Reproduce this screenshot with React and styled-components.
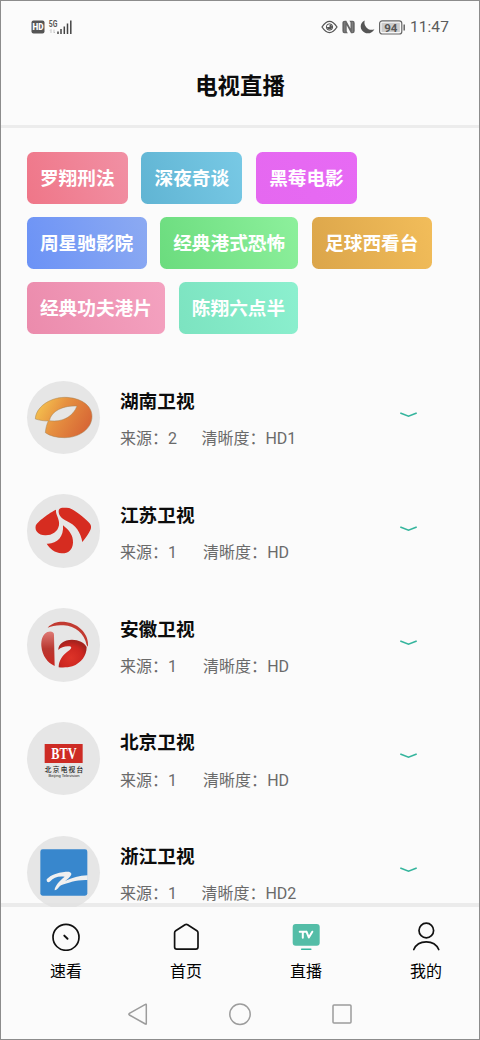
import React from 'react';
import styled, { createGlobalStyle, ThemeProvider } from 'styled-components';

const theme = {
  background: '#fbfbfb',
  divider: '#ececec',
  frame: '#8c8c8c',
  avatar: '#e6e6e6',
  text: '#0c0c0c',
  muted: '#6a6a6a',
  status: '#5c5c5c',
  system: '#9c9c9c',
  accent: '#35b59d'
};

const GlobalStyle = createGlobalStyle`
  * {
    box-sizing: border-box;
  }

  body {
    margin: 0;
    font-family: Roboto, 'Noto Sans CJK SC', sans-serif;
  }

  svg {
    display: block;
    flex-shrink: 0;
  }
`;

const Screen = styled.div`
  width: 480px;
  height: 1040px;
  display: flex;
  flex-direction: column;
  overflow: hidden;
  color: ${props => props.theme.text};
  background: ${props => props.theme.background};
  border: 1px solid ${props => props.theme.frame};
`;

const StatusBar = styled.div`
  height: 52px;
  display: flex;
  align-items: center;
  justify-content: space-between;
  padding: 0 30px;
  flex-shrink: 0;
`;

const StatusGroup = styled.div`
  display: flex;
  align-items: center;
  gap: ${props => props.gap};
`;

const Clock = styled.span`
  font-size: 15.5px;
  line-height: 20px;
  letter-spacing: 0.1px;
  color: ${props => props.theme.status};
`;

const Header = styled.header`
  height: 75px;
  padding-top: 16px;
  flex-shrink: 0;
  border-bottom: 3px solid ${props => props.theme.divider};
`;

const Title = styled.h1`
  margin: 0;
  font-size: 22.4px;
  line-height: 34px;
  font-weight: 700;
  text-align: center;
`;

const Content = styled.main`
  height: 779px;
  overflow: hidden;
  flex-shrink: 0;
`;

const Tags = styled.div`
  display: flex;
  flex-wrap: wrap;
  gap: 13.33px;
  padding: 23.5px 25.6px 0;
`;

const Tag = styled.button`
  height: 52px;
  padding: 1px 13.33px 0;
  border: none;
  border-radius: 6.5px;
  font-family: inherit;
  font-size: 18.67px;
  font-weight: 700;
  line-height: 52px;
  color: #fff;
  background: linear-gradient(70deg, ${props => props.from}, ${props => props.to});
`;

const Channels = styled.div`
  padding: 46.5px 25.6px 0;
`;

const Channel = styled.div`
  height: 113.83px;
  display: flex;
`;

const Avatar = styled.div`
  width: 73.33px;
  height: 73.33px;
  border-radius: 50%;
  overflow: hidden;
  flex-shrink: 0;
  background: ${props => props.theme.avatar};
`;

const Info = styled.div`
  flex-grow: 1;
  margin-left: 20px;
`;

const Name = styled.div`
  margin-top: 7.2px;
  font-size: 18.67px;
  line-height: 28px;
  font-weight: 700;
`;

const Meta = styled.div`
  display: flex;
  margin-top: 11.2px;
  font-size: 16px;
  line-height: 24px;
  font-weight: 400;
  color: ${props => props.theme.muted};
`;

const Source = styled.span`
  width: ${props => props.width};
`;

const Expand = styled.div`
  margin-top: 31.2px;
  margin-right: 36.4px;
`;

/* the translucent top border lies over the last row of the list */
const TabBar = styled.nav`
  height: 83px;
  display: flex;
  justify-content: space-between;
  margin-top: -4px;
  padding: 14px 33px 0 45px;
  flex-shrink: 0;
  position: relative;
  background: ${props => props.theme.background};
  background-clip: padding-box;
  border-top: 4px solid rgba(225, 225, 225, 0.6);
`;

const Tab = styled.div`
  width: 40px;
  display: flex;
  flex-direction: column;
  align-items: center;
`;

const TabLabel = styled.span`
  margin-top: 9px;
  font-size: 16px;
  line-height: 24px;
  color: #000;
`;

const SystemBar = styled.div`
  display: flex;
  justify-content: center;
  gap: 78px;
  padding-top: 16px;
`;

const SignalIcon = () => (
  <svg width="24" height="16" viewBox="48 19 24 16">
    <text x="48.8" y="27" fontSize="8.5" fontWeight="700" fontFamily="Roboto" fill="#555" textLength="8.6" lengthAdjust="spacingAndGlyphs">
      5G
    </text>
    <path d="M51 33v-3.5l-1 1M54 29.5V33l1-1" fill="none" stroke="#bbb" strokeWidth="0.8" />
    <path d="M58 31.5V34M61 29V34M64.3 26.5V34M67.5 23.5V34M70.8 20.5V34" stroke="#444" strokeWidth="1.5" />
  </svg>
);

const HdIcon = () => (
  <svg width="14" height="14" viewBox="0 0 14 14">
    <rect x="0.5" y="0.5" width="13" height="13" rx="2" fill="#555" />
    <text x="1.5" y="10" fontSize="8.5" fontWeight="900" fontFamily="Roboto" fill="#fff" textLength="11" lengthAdjust="spacingAndGlyphs">
      HD
    </text>
  </svg>
);

const EyeIcon = () => (
  <svg width="17" height="14" viewBox="0 0 17 14" fill="none" stroke="#555">
    <path d="M1 7C3.8 2.8 6 1.3 8.5 1.3S13.2 2.8 16 7C13.2 11.2 11 12.7 8.5 12.7S3.8 11.2 1 7Z" strokeWidth="1.3" />
    <circle cx="8.5" cy="7" r="3.2" strokeWidth="1" />
    <path d="M8.5 4.5A2.5 2.5 0 1 1 6 7H8.5Z" fill="#555" stroke="none" />
  </svg>
);

const NfcIcon = () => (
  <svg width="13" height="14" viewBox="0 0 13 14">
    <path d="M3 .7H4.3L8.5 8.5V2.5L7.4 .7H10.5Q12.7 .7 12.7 3V11Q12.7 13.3 10.5 13.3H9L4.7 5.3V11.2L5.8 13.3H2.5Q.4 13.3 .4 11V3Q.4 .7 3 .7Z" fill="#666" />
    <path d="M2.8 2V12M10.3 2V12" stroke="#999" strokeWidth="0.6" />
  </svg>
);

const MoonIcon = () => (
  <svg width="15" height="14" viewBox="0 0 15 14">
    <path d="M4.8 .4C.6 2 -.4 7 1.9 10.3C5 14.8 12 14.3 14.4 9.2C11.5 10.6 8 9.7 6.2 7.3C4.5 5.1 4 2.8 4.8 .4Z" fill="#555" />
  </svg>
);

const BatteryIcon = () => (
  <svg width="26" height="15" viewBox="0.2 0 26 15">
    <rect x="0.8" y="0.8" width="22.2" height="13.2" rx="2.6" fill="none" stroke="#666" strokeWidth="1.2" />
    <rect x="2.7" y="2.7" width="18.4" height="9.4" fill="#ccc" />
    <path d="M25.4 4.5V10.5" stroke="#666" strokeWidth="1.5" />
    <text x="12" y="11.6" textAnchor="middle" fontSize="11.5" fontWeight="700" fontFamily="Roboto" fill="#555">
      94
    </text>
  </svg>
);

const HunanLogo = () => (
  <svg width="73.33" height="73.33" viewBox="50 32 220 220">
    <defs>
      <linearGradient id="hunan" x1="0" y1="0.2" x2="1" y2="0.6">
        <stop offset="0" stopColor="#f6c650" />
        <stop offset="0.45" stopColor="#e69040" />
        <stop offset="1" stopColor="#d76635" />
      </linearGradient>
    </defs>
    <path
      d="M75 146C76 112 116 82 162 81C212 81 245 106 245 138C245 176 206 202 163 202C138 202 119 197 105 187C106 174 109 162 114 152C100 152 88 150 75 146ZM117 151C158 157 189 137 200 107C160 105 123 121 117 151Z"
      fill="url(#hunan)"
      fillRule="evenodd"
      stroke="#a58355"
      strokeWidth="1.5"
    />
  </svg>
);

const JiangsuLogo = () => (
  <svg width="73.33" height="73.33" viewBox="50 28 220 220" fill="#d62c20">
    <path d="M137 75C135 91 149 102 146 122C142 143 123 153 104 152C84 151 73 138 76 124C79 112 119 83 137 75Z" />
    <path d="M145 78C146 69 155 68 176 70C190 74 228 103 239 117C246 128 243 137 216 172C211 143 196 121 169 109C153 102 144 92 145 78Z" />
    <path d="M158 122C177 137 189 153 188 174C187 197 172 207 154 206C133 204 118 192 109 177C139 179 161 158 158 122Z" />
  </svg>
);

const AnhuiLogo = () => (
  <svg width="73.33" height="73.33" viewBox="50 25 220 220">
    <defs>
      <radialGradient id="anhui" cx="0.45" cy="0.65" r="0.6">
        <stop offset="0" stopColor="#dd3328" />
        <stop offset="0.7" stopColor="#cc2620" />
        <stop offset="1" stopColor="#a6231e" />
      </radialGradient>
      <linearGradient id="anhuiLeft" x1="0" y1="0" x2="0" y2="1">
        <stop offset="0" stopColor="#df7b76" />
        <stop offset="0.5" stopColor="#b93831" />
        <stop offset="1" stopColor="#c92720" />
      </linearGradient>
    </defs>
    <path d="M112 84C126 69 145 65 166 67C207 72 237 106 233 141L229 136C222 101 195 79 160 77C141 75 125 79 112 84Z" fill="#c23a31" />
    <path d="M131 106C132 96 121 93 111 97C97 103 92 120 93 139C96 170 112 189 133 199Z" fill="url(#anhuiLeft)" />
    <path d="M144 151C143 133 161 120 185 120C205 120 222 129 229 142C229 168 213 190 186 200C173 204 157 204 145 203C145 185 155 166 178 151C187 143 182 139 173 140C161 140 151 144 144 151Z" fill="url(#anhui)" />
  </svg>
);

const BeijingLogo = () => (
  <svg width="73.33" height="73.33" viewBox="50 36 220 220" textAnchor="middle">
    <rect x="103" y="102" width="114" height="57" fill="#cd2b24" />
    <text x="161" y="147" fontFamily="Liberation Serif" fontSize="48" fontWeight="700" fill="#fff" textLength="76" lengthAdjust="spacingAndGlyphs">
      BTV
    </text>
    <text x="161" y="187" fontFamily="Noto Sans CJK SC" fontSize="20" fontWeight="500" fill="#222" textLength="115">
      北京电视台
    </text>
    <text x="161" y="201" fontFamily="Liberation Sans" fontSize="12" fill="#222" textLength="93" lengthAdjust="spacingAndGlyphs">
      Beijing Television
    </text>
  </svg>
);

const ZhejiangLogo = () => (
  <svg width="73.33" height="73.33" viewBox="50 33 220 220">
    <rect x="90" y="73" width="141" height="139" rx="7" fill="#3887cd" />
    <path
      d="M109 163C121 148 151 140 176 140C190 145 182 154 164 168C185 159 207 152 232 151V165C202 163 171 174 154 180C145 184 143 194 133 196C132 184 148 167 163 155C144 152 129 158 120 169C114 175 108 171 109 163Z"
      fill="#f0f0f0"
    />
  </svg>
);

const ChevronIcon = () => (
  <svg width="17" height="6" viewBox="0 0 17 6">
    <path d="M0.3 1L8.5 4.2L16.7 1" fill="none" stroke="#35b59d" strokeWidth="1.7" />
  </svg>
);

const TabSvg = styled.svg.attrs({ width: 30, height: 30, viewBox: '0 0 30 30' })`
  fill: none;
  stroke: #111;
  stroke-width: 1.7;
  stroke-linecap: round;
  stroke-linejoin: round;
`;

const QuickIcon = () => (
  <TabSvg>
    <circle cx="15" cy="16.3" r="13" />
    <path d="M13.3 14.6L16.5 17.8" strokeWidth="2" />
  </TabSvg>
);

const HomeIcon = () => (
  <TabSvg>
    <path d="M3.6 11.8Q3.6 10.5 4.7 9.7L14 3.8Q15.3 3 16.6 3.8L25.9 9.7Q27 10.5 27 11.8V26Q27 28.2 24.8 28.2H5.8Q3.6 28.2 3.6 26Z" />
  </TabSvg>
);

const LiveIcon = () => (
  <TabSvg>
    <rect x="1.7" y="3" width="27" height="21.7" rx="3" fill="#54bda7" stroke="none" />
    <path d="M8.7 10.7H15M11.8 10.7V16.8M15.5 10.7L17.8 16.5L21.3 10.7" stroke="#fff" strokeWidth="2" />
    <path d="M10.7 28.3H19.8" stroke="#35b59d" strokeWidth="1.6" />
  </TabSvg>
);

const ProfileIcon = () => (
  <TabSvg>
    <circle cx="15.3" cy="9.5" r="7.3" />
    <path d="M2.8 28.5C7.2 18.3 23.3 18.3 27.7 28.5" />
  </TabSvg>
);

const tags = [
  { label: '罗翔刑法', from: '#ef7688', to: '#f190a4' },
  { label: '深夜奇谈', from: '#60b4d3', to: '#78c9e5' },
  { label: '黑莓电影', from: '#e568f0', to: '#e76af4' },
  { label: '周星驰影院', from: '#6b92f6', to: '#8caaf2' },
  { label: '经典港式恐怖', from: '#6bdc7e', to: '#8df09c' },
  { label: '足球西看台', from: '#dba54a', to: '#f2bd5a' },
  { label: '经典功夫港片', from: '#eb8bac', to: '#f4a2c0' },
  { label: '陈翔六点半', from: '#7ce3c0', to: '#8cf0cf' }
];

const channels = [
  { name: '湖南卫视', source: 2, quality: 'HD1', offset: '81.5px', Logo: HunanLogo },
  { name: '江苏卫视', source: 1, quality: 'HD', offset: '83.2px', Logo: JiangsuLogo },
  { name: '安徽卫视', source: 1, quality: 'HD', offset: '83.2px', Logo: AnhuiLogo },
  { name: '北京卫视', source: 1, quality: 'HD', offset: '83.2px', Logo: BeijingLogo },
  { name: '浙江卫视', source: 1, quality: 'HD2', offset: '81.5px', Logo: ZhejiangLogo }
];

const tabs = [
  { label: '速看', Icon: QuickIcon },
  { label: '首页', Icon: HomeIcon },
  { label: '直播', Icon: LiveIcon },
  { label: '我的', Icon: ProfileIcon }
];

const App = () => (
  <ThemeProvider theme={theme}>
    <GlobalStyle />
    <Screen>
      <StatusBar>
        <StatusGroup gap="3px">
          <HdIcon />
          <SignalIcon />
        </StatusGroup>
        <StatusGroup gap="4.5px">
          <EyeIcon />
          <NfcIcon />
          <MoonIcon />
          <BatteryIcon />
          <Clock>11:47</Clock>
        </StatusGroup>
      </StatusBar>
      <Header>
        <Title>电视直播</Title>
      </Header>
      <Content>
        <Tags>
          {tags.map(({ label, from, to }) => (
            <Tag key={label} from={from} to={to}>
              {label}
            </Tag>
          ))}
        </Tags>
        <Channels>
          {channels.map(({ name, source, quality, offset, Logo }) => (
            <Channel key={name}>
              <Avatar>
                <Logo />
              </Avatar>
              <Info>
                <Name>{name}</Name>
                <Meta>
                  <Source width={offset}>来源：{source}</Source>
                  <span>清晰度：{quality}</span>
                </Meta>
              </Info>
              <Expand>
                <ChevronIcon />
              </Expand>
            </Channel>
          ))}
        </Channels>
      </Content>
      <TabBar>
        {tabs.map(({ label, Icon }) => (
          <Tab key={label}>
            <Icon />
            <TabLabel>{label}</TabLabel>
          </Tab>
        ))}
      </TabBar>
      <SystemBar>
        <svg width="24" height="24" viewBox="0 0 24 24" fill="none" stroke={theme.system} strokeWidth="1.5">
          <path d="M20.3 2.8V21.6Q20.3 22.6 19.4 22L3.4 13Q2.3 12.2 3.4 11.4L19.4 2.4Q20.3 1.8 20.3 2.8Z" />
        </svg>
        <svg width="24" height="24" viewBox="0 0 24 24" fill="none" stroke={theme.system} strokeWidth="1.5">
          <circle cx="12" cy="12.2" r="10.2" />
        </svg>
        <svg width="24" height="24" viewBox="0 0 24 24" fill="none" stroke={theme.system} strokeWidth="1.5">
          <rect x="3" y="3" width="18" height="18" rx="1" />
        </svg>
      </SystemBar>
    </Screen>
  </ThemeProvider>
);

export default App;
